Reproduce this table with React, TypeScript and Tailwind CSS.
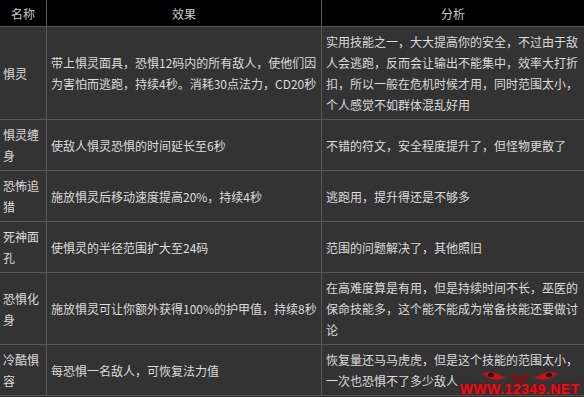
import React from "react";

const rows = [
  {
    name: "惧灵",
    effect: "带上惧灵面具，恐惧12码内的所有敌人，使他们因为害怕而逃跑，持续4秒。消耗30点法力，CD20秒",
    note: "实用技能之一，大大提高你的安全，不过由于敌人会逃跑，反而会让输出不能集中，效率大打折扣，所以一般在危机时候才用，同时范围太小，个人感觉不如群体混乱好用",
    h: "h-[92px]",
  },
  { name: "惧灵缠身", effect: "使敌人惧灵恐惧的时间延长至6秒", note: "不错的符文，安全程度提升了，但怪物更散了", h: "h-[50px]" },
  { name: "恐怖追猎", effect: "施放惧灵后移动速度提高20%，持续4秒", note: "逃跑用，提升得还是不够多", h: "h-[50px]" },
  { name: "死神面孔", effect: "使惧灵的半径范围扩大至24码", note: "范围的问题解决了，其他照旧", h: "h-[50px]" },
  {
    name: "恐惧化身",
    effect: "施放惧灵可让你额外获得100%的护甲值，持续8秒",
    note: "在高难度算是有用，但是持续时间不长，巫医的保命技能多，这个能不能成为常备技能还要做讨论",
    h: "h-[71px]",
  },
  { name: "冷酷惧容", effect: "每恐惧一名敌人，可恢复法力值", note: "恢复量还马马虎虎，但是这个技能的范围太小，一次也恐惧不了多少敌人", h: "h-[50px]" },
];

// red site stamp in the bottom right corner
function Watermark() {
  return (
    <div className="absolute right-[4px] bottom-[1px] flex flex-col items-center pointer-events-none">
      <svg width="80" height="14" viewBox="0 0 80 14" className="-mb-[2px]">
        <path d="M2 3 Q14 0 26 8 L18 10 Q8 9 2 3Z" fill="#c8101a" />
        <path d="M78 3 Q66 0 54 8 L62 10 Q72 9 78 3Z" fill="#c8101a" />
        <ellipse cx="11" cy="5" rx="3" ry="2" fill="#300" />
        <ellipse cx="69" cy="5" rx="3" ry="2" fill="#300" />
        <path d="M30 6 L40 12 L50 6 M34 4 L40 9 L46 4" stroke="#a00" strokeWidth="1.5" fill="none" />
      </svg>
      <div
        className="text-[14px] leading-[14px] font-bold tracking-[0.5px] text-[#e0141e]"
        style={{ fontFamily: "'Liberation Sans', Arial, sans-serif", textShadow: "0 0 2px #900, 0 0 1px #600" }}
      >
        WWW.12349.NET
      </div>
    </div>
  );
}

export default function App() {
  return (
    <div
      className="relative w-[584px] h-[397px] bg-[#2e2e2e] text-[12px] leading-[21px] text-[#dcdcdc] overflow-hidden"
      style={{ fontFamily: "'Noto Sans CJK SC', 'Liberation Sans', sans-serif" }}
    >
      <div className="grid grid-cols-[46px_274px_262px] gap-px bg-[#585858] border-b border-[#585858]">
        <div className="h-[26px] bg-black flex items-center justify-center text-[#c8c8c8]">名称</div>
        <div className="h-[26px] bg-black flex items-center justify-center text-[#c8c8c8]">效果</div>
        <div className="h-[26px] bg-black flex items-center justify-center text-[#c8c8c8]">分析</div>
        {rows.map((r) => (
          <React.Fragment key={r.name}>
            <div className={`${r.h} bg-[#333333] flex items-center pl-[3px] pr-[4px]`}>
              <span className="break-all">{r.name}</span>
            </div>
            <div className={`${r.h} bg-[#333333] flex items-center px-[4px]`}>
              <span className="break-all">{r.effect}</span>
            </div>
            <div className={`${r.h} bg-[#333333] flex items-center pl-[4px] pr-[3px]`}>
              <span className="break-all">{r.note}</span>
            </div>
          </React.Fragment>
        ))}
      </div>
      <Watermark />
    </div>
  );
}
